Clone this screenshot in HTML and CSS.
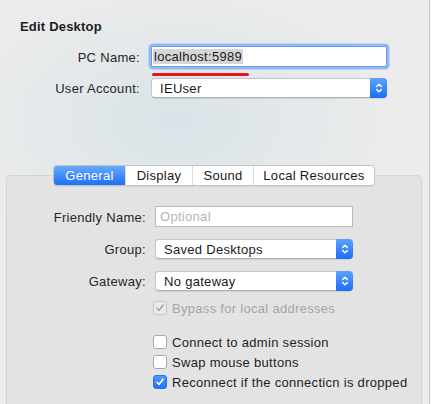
FILE: index.html
```html
<!DOCTYPE html>
<html>
<head>
<meta charset="utf-8">
<link rel="stylesheet" href="styles.css">
</head>
<body>
<div class="window">
  <h1 class="title">Edit Desktop</h1>
  <div class="form top">
    <div class="lbl">PC Name:</div>
    <div class="field focus"><span class="selected">localhost:5989</span><div class="redline"></div></div>
    <div class="lbl">User Account:</div>
    <div class="popup"><span class="ptext">IEUser</span><span class="stepper"><svg width="8" height="12" viewBox="0 0 8 12"><path d="M1.6 4.6 L4 2.2 L6.4 4.6 M1.6 7.4 L4 9.8 L6.4 7.4" fill="none" stroke="#fff" stroke-width="1.4" stroke-linecap="round" stroke-linejoin="round"/></svg></span></div>
  </div>
  <div class="panel">
    <div class="tabbar">
      <div class="tabs">
        <div class="tab active t1">General</div>
        <div class="tab t2">Display</div>
        <div class="tab t3">Sound</div>
        <div class="tab t4">Local Resources</div>
      </div>
    </div>
    <div class="form inner">
      <div class="lbl">Friendly Name:</div>
      <div class="field plain"><span class="placeholder">Optional</span></div>
      <div class="lbl">Group:</div>
      <div class="popup"><span class="ptext">Saved Desktops</span><span class="stepper"><svg width="8" height="12" viewBox="0 0 8 12"><path d="M1.6 4.6 L4 2.2 L6.4 4.6 M1.6 7.4 L4 9.8 L6.4 7.4" fill="none" stroke="#fff" stroke-width="1.4" stroke-linecap="round" stroke-linejoin="round"/></svg></span></div>
      <div class="lbl">Gateway:</div>
      <div class="popup"><span class="ptext">No gateway</span><span class="stepper"><svg width="8" height="12" viewBox="0 0 8 12"><path d="M1.6 4.6 L4 2.2 L6.4 4.6 M1.6 7.4 L4 9.8 L6.4 7.4" fill="none" stroke="#fff" stroke-width="1.4" stroke-linecap="round" stroke-linejoin="round"/></svg></span></div>
    </div>
    <div class="checks">
      <div class="check disabled"><span class="box"><svg width="12" height="12" viewBox="0 0 12 12"><path d="M3 6.3 L5 8.5 L9 3.2" fill="none" stroke="#a6a6a6" stroke-width="1.6" stroke-linecap="round" stroke-linejoin="round"/></svg></span><span>Bypass for local addresses</span></div>
      <div class="check gap"><span class="box"></span><span>Connect to admin session</span></div>
      <div class="check"><span class="box"></span><span>Swap mouse buttons</span></div>
      <div class="check on"><span class="box"><svg width="12" height="12" viewBox="0 0 12 12"><path d="M3 6.3 L5 8.5 L9 3.2" fill="none" stroke="#fff" stroke-width="1.6" stroke-linecap="round" stroke-linejoin="round"/></svg></span><span>Reconnect if the connecticn is dropped</span></div>
    </div>
  </div>
</div>
</body>
</html>
```
FILE: styles.css
```css
html, body {
  margin: 0;
  padding: 0;
}
body {
  background: #f2f2f2;
  font-family: "Liberation Sans", Arial, sans-serif;
  font-size: 13px;
  letter-spacing: 0.3px;
  color: #1e1e1e;
  overflow: hidden;
}
.window {
  width: 429px;
  height: 404px;
  border-right: 1px solid #c4c4c4;
  overflow: hidden;
  background: radial-gradient(ellipse 230px 140px at 175px 120px, #d9e3e8 0%, #e3e8ea 50%, #ececec 100%);
}
.title {
  margin: 0;
  padding: 19px 0 0 20px;
  font-size: 13px;
  font-weight: bold;
  letter-spacing: 0.2px;
  line-height: 16px;
  color: #1e1e1e;
}
.form {
  display: grid;
  align-items: center;
}
.top {
  grid-template-columns: 140px 236px;
  grid-template-rows: 21px 20px;
  column-gap: 11px;
  row-gap: 11px;
  margin-top: 11px;
}
.lbl {
  text-align: right;
  line-height: 16px;
  padding-top: 2px;
  color: #262626;
}
.field {
  position: relative;
  box-sizing: border-box;
  height: 21px;
  background: #fff;
  display: flex;
  align-items: center;
}
.field.focus {
  border: 1px solid #6d9be8;
  border-radius: 2px;
  box-shadow: 0 0 0 2.5px #93b9f3;
  padding-left: 1px;
}
.selected {
  background: #d6d6d6;
  line-height: 15px;
  padding: 0 1px;
  color: #1a1a1a;
}
.redline {
  position: absolute;
  left: 0;
  top: 26px;
  width: 97px;
  height: 2.5px;
  border-radius: 2px;
  background: #e5161c;
}
.field.plain {
  border: 1px solid #bcbcbc;
  padding-left: 4px;
}
.placeholder {
  color: #b4b4b4;
}
.popup {
  box-sizing: border-box;
  height: 20px;
  border: 1px solid #c6c6c6;
  border-bottom-color: #adadad;
  border-radius: 4px;
  background: #fff;
  display: flex;
  align-items: center;
  padding-left: 8px;
  box-shadow: 0 0.5px 1px rgba(0, 0, 0, 0.08);
}
.ptext {
  flex: 1;
  color: #1a1a1a;
}
.stepper {
  align-self: stretch;
  width: 17px;
  margin: -1px -1px -1px 0;
  border-radius: 0 4px 4px 0;
  background: linear-gradient(#5ca3fd, #1c6ef4);
  display: flex;
  align-items: center;
  justify-content: center;
}
.panel {
  box-sizing: border-box;
  margin: 77px 0 0 6px;
  width: 416px;
  height: 260px;
  border: 1px solid #d3d3d3;
  border-radius: 5px;
  background: #e3e3e3;
}
.tabbar {
  display: flex;
  justify-content: center;
  margin-top: -11px;
}
.tabs {
  display: flex;
  border: 1px solid #c4c4c4;
  border-radius: 4px;
  background: #fff;
  overflow: hidden;
  box-shadow: 0 0.5px 1px rgba(0, 0, 0, 0.06);
}
.tab {
  height: 19px;
  line-height: 19px;
  text-align: center;
  color: #1a1a1a;
  border-left: 1px solid #dcdcdc;
  white-space: nowrap;
}
.tab.t1 { width: 71px; border-left: none; }
.tab.t2 { width: 66px; }
.tab.t3 { width: 60px; }
.tab.t4 { width: 120px; }
.tab.active {
  background: linear-gradient(#66aafd, #1d6ff5);
  color: #fff;
}
.inner {
  grid-template-columns: 139px 198px;
  grid-template-rows: 21px 20px 20px;
  column-gap: 9px;
  row-gap: 12px;
  margin-top: 20px;
}
.checks {
  margin-top: 7px;
  padding-left: 146px;
  display: flex;
  flex-direction: column;
}
.check {
  height: 20px;
  display: flex;
  align-items: center;
  color: #1e1e1e;
  white-space: nowrap;
}
.check.gap {
  margin-top: 14px;
}
.box {
  box-sizing: border-box;
  width: 14px;
  height: 14px;
  border: 1px solid #a9a9a9;
  border-radius: 3px;
  background: #fff;
  margin-right: 5px;
  display: flex;
  align-items: center;
  justify-content: center;
  flex-shrink: 0;
}
.check.disabled {
  color: #a5a5a5;
}
.check.disabled .box {
  background: #eaeaea;
  border-color: #c4c4c4;
}
.check.on .box {
  background: linear-gradient(#4f9bfd, #1f72f5);
  border-color: #2d73e6;
}
```
